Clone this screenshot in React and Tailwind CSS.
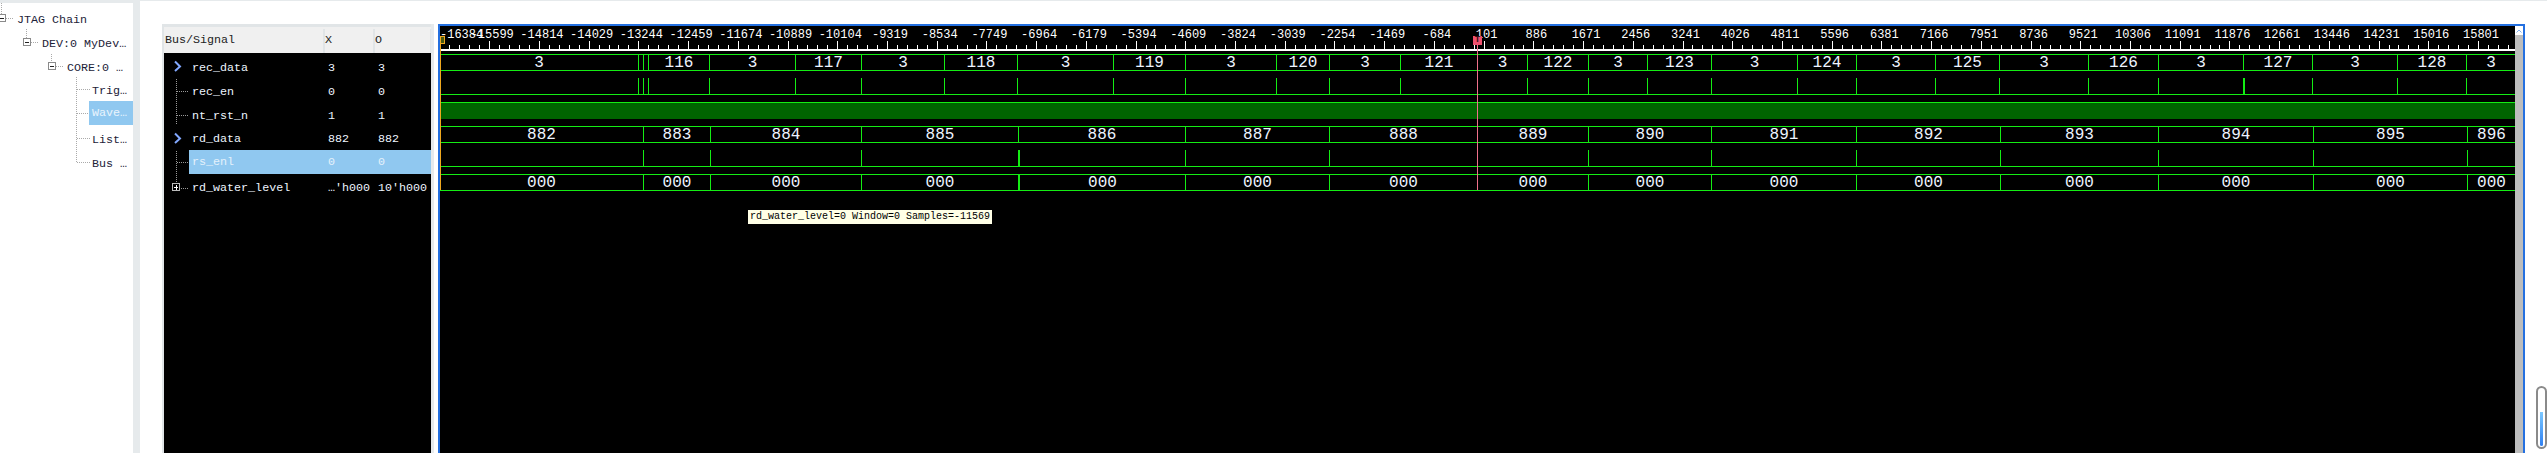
const GREEN = '#14ec14';

// pixel edges of the transitions, measured from the wave panel's left edge (x = 440)
const recEdges = [440, 638, 643, 648, 709, 795, 861, 944, 1017, 1113, 1185, 1276, 1329, 1400, 1477, 1527, 1588, 1647, 1711, 1797, 1856, 1935, 1999, 2088, 2158, 2243, 2312, 2397, 2466, 2515];
const recValues = ['3', '', '', '116', '3', '117', '3', '118', '3', '119', '3', '120', '3', '121', '3', '122', '3', '123', '3', '124', '3', '125', '3', '126', '3', '127', '3', '128', '3'];
const rdEdges = [440, 643, 710, 861, 1018, 1185, 1329, 1477, 1588, 1711, 1856, 2000, 2158, 2313, 2467, 2515];
const rdValues = ['882', '883', '884', '885', '886', '887', '888', '889', '890', '891', '892', '893', '894', '895', '896'];
const levelValues = rdValues.map(() => '000');

const signals = [
    { name: 'rec_data', x: '3', o: '3', h: 'h-6' },
    { name: 'rec_en', x: '0', o: '0', h: 'h-6' },
    { name: 'nt_rst_n', x: '1', o: '1', h: 'h-6' },
    { name: 'rd_data', x: '882', o: '882', h: 'h-[22px]' },
    { name: 'rs_enl', x: '0', o: '0', h: 'h-6', selected: true },
    { name: 'rd_water_level', x: "…'h000", o: "10'h000", h: 'h-6 mt-[2px]' },
];

const treeRows = [
    { label: 'JTAG Chain', pad: 'pl-[17px]', h: 'h-6' },
    { label: 'DEV:0 MyDev…', pad: 'pl-[42px]', h: 'h-6' },
    { label: 'CORE:0 …', pad: 'pl-[67px]', h: 'h-6' },
    { label: 'Trig…', pad: 'pl-[92px]', h: 'h-[22px]' },
    { label: 'Wave…', pad: 'pl-[89px]', h: 'h-6', selected: true },
    { label: 'List…', pad: 'pl-[92px]', h: 'h-6 mt-[2px]' },
    { label: 'Bus …', pad: 'pl-[92px]', h: 'h-6' },
];

const TreeLines = () => (
    <svg className="absolute left-0 top-0" width="133" height="180" shapeRendering="crispEdges">
        <g stroke="#aaa" strokeDasharray="1 1" fill="none">
            <path d="M1.5 0V11M6 15.5H13" />
            <path d="M26.5 26V35M31 39.5H38" />
            <path d="M51.5 51V59M56 63.5H63" />
            <path d="M76.5 74V159.5M77 86.5H90M77 110.5H89M77 135.5H90M77 159.5H90" />
        </g>
        <g stroke="#8a8a8a" fill="#fff">
            <rect x="-2.5" y="11.5" width="8" height="7" />
            <rect x="23.5" y="35.5" width="7" height="7" />
            <rect x="48.5" y="59.5" width="7" height="7" />
        </g>
        <path d="M0 15.5H4M25 39.5H29M50 63.5H54" stroke="#222" />
    </svg>
);

const SignalLines = () => (
    <svg className="absolute left-0 top-0" width="30" height="150" shapeRendering="crispEdges">
        <g stroke="#9a9a9a" strokeDasharray="1 1" fill="none">
            <path d="M12.5 26V72M13 38.5H24M13 62.5H24" />
            <path d="M12.5 98V130M13 109.5H25M17 135.5H24" />
        </g>
        <rect x="8.5" y="130.5" width="7" height="7" stroke="#bbb" fill="#000" />
        <path d="M10 134.5H14M12.5 132V137" stroke="#fff" />
        <g shapeRendering="auto" stroke="#82a8ff" strokeWidth="2" fill="none">
            <path d="M11 8.5L16 13.5L11 18" />
            <path d="M11 80.5L16 85.5L11 90" />
        </g>
    </svg>
);

const Ruler = () => {
    const width = 2075;
    const ticks = [];
    for (let i = 0; i <= 208; i++) {
        const x = Math.round(-0.5 + 9.944 * i);
        if (x >= 0 && x < width) ticks.push({ x, major: i % 5 === 0 });
    }
    const labels = [];
    for (let k = 0; k <= 41; k++) labels.push({ k, text: String(-16384 + 785 * k) });
    return (
        <div className="relative h-6 shrink-0">
            {labels.map(({ k, text }) => (
                <span
                    key={k}
                    className={`absolute top-[3px] text-[12px] leading-[13px] text-white whitespace-nowrap ${k === 0 ? '' : '-translate-x-1/2'}`}
                    style={{ left: k === 0 ? 0 : -0.5 + 49.72 * k + 3 }}
                >
                    {text}
                </span>
            ))}
            <svg className="absolute left-0 top-0" width={width} height="25" shapeRendering="crispEdges">
                {ticks.map(({ x, major }) => (
                    <rect key={x} x={x} y={major ? 15 : 19} width="1" height={major ? 8 : 4} fill="#fff" />
                ))}
                <rect x="0" y="23" width={width} height="2" fill="#fff" />
            </svg>
        </div>
    );
};

const BusRow = ({ edges, values, thick = [] }) => (
    <div className="flex h-[17px] border-y border-[#14ec14]">
        {values.map((value, i) => (
            <div
                key={i}
                className="flex items-center justify-center text-[16px] leading-none text-[#eef4ff] overflow-hidden"
                style={{
                    width: edges[i + 1] - edges[i],
                    borderLeft: i === 0 ? 'none' : `${thick.includes(edges[i]) ? 2 : 1}px solid ${GREEN}`,
                }}
            >
                {value}
            </div>
        ))}
    </div>
);

const BitRow = ({ edges, thick = [] }) => (
    <div className="flex h-[17px] border-b border-[#14ec14]">
        {edges.slice(0, -1).map((edge, i) => (
            <div
                key={edge}
                style={{
                    width: edges[i + 1] - edge,
                    borderLeft: i === 0 ? 'none' : `${thick.includes(edge) ? 2 : 1}px solid ${GREEN}`,
                }}
            />
        ))}
    </div>
);

export default function App() {
    return (
        <div className="flex h-[453px] w-[2547px] overflow-hidden bg-white font-['Liberation_Mono',monospace] text-[11.7px]">
            {/* Project tree */}
            <aside className="relative w-[140px] shrink-0 border-r-[7px] border-t-[3px] border-[#e6eaec] pt-1 text-[#1c2238]">
                <TreeLines />
                {treeRows.map((row) => (
                    <div key={row.label} className={`flex items-center ${row.h}`}>
                        {row.selected ? (
                            <div className="ml-[89px] flex h-full flex-1 items-center bg-[#90c8f0] pl-[3px] pt-[2px] text-[#e9f4fd]">{row.label}</div>
                        ) : (
                            <div className={`relative pt-[3px] ${row.pad}`}>{row.label}</div>
                        )}
                    </div>
                ))}
            </aside>

            <main className="flex flex-1 border-t border-[#e6eaec] pl-[22px] pt-[23px]">
                {/* Signal table */}
                <section className="flex w-[269px] shrink-0 flex-col border-l-2 border-t-[3px] border-[#e1e5e7]">
                    <div className="flex h-[26px] shrink-0 items-center bg-[#f0f0f0] pt-[2px] text-[#222]">
                        <div className="flex h-full w-[161px] items-center border-r-2 border-[#e1e5e7] pl-px">Bus/Signal</div>
                        <div className="flex h-full w-[50px] items-center border-r-2 border-[#e1e5e7]">X</div>
                        <div className="flex h-full flex-1 items-center border-r border-[#e1e5e7]">O</div>
                    </div>
                    <div className="relative flex-1 bg-black pt-[3px] text-[#eef6ff]">
                        {signals.map((s) => (
                            <div key={s.name} className={`flex pl-[25px] ${s.h}`}>
                                <div className={`flex flex-1 items-center pt-[2px] ${s.selected ? 'bg-[#90c8f0] text-[#e4f1fb]' : ''}`}>
                                    <span className="w-[139px] pl-[3px]">{s.name}</span>
                                    <span className="w-[50px]">{s.x}</span>
                                    <span>{s.o}</span>
                                </div>
                            </div>
                        ))}
                        <SignalLines />
                    </div>
                </section>

                <div className="w-[7px] shrink-0 border-l-[3px] border-[#e6eaec]" />

                {/* Wave window */}
                <section className="relative flex w-[2087px] shrink-0 border-x-2 border-t-2 border-[#2470e0] bg-black">
                    <div className="flex w-[2075px] shrink-0 flex-col">
                        <Ruler />
                        <div className="mt-1 flex flex-col gap-[7px]">
                            <BusRow edges={recEdges} values={recValues} />
                            <BitRow edges={recEdges} thick={[2243]} />
                            <div className="h-[17px] border-t border-[#14ec14] bg-[#006400]" />
                            <BusRow edges={rdEdges} values={rdValues} />
                            <BitRow edges={rdEdges} thick={[1018]} />
                            <BusRow edges={rdEdges} values={levelValues} thick={[1018]} />
                        </div>
                    </div>

                    {/* vertical scrollbar */}
                    <div className="w-2 shrink-0 bg-[#bdbdbd]">
                        <div className="flex h-[9px] items-center justify-center bg-white">
                            <svg width="6" height="4" viewBox="0 0 6 4" fill="none" stroke="#7fb0ee" strokeWidth="1">
                                <path d="M0.5 3.5L3 1L5.5 3.5" />
                            </svg>
                        </div>
                    </div>

                    {/* X marker and cursor */}
                    <div className="absolute left-0 top-[10px] h-[154px] w-px bg-[#f0a81e]" />
                    <div className="absolute left-0 top-[10px] h-[8px] w-[5px] border border-[#f0a81e] bg-[#4a5a10]" />
                    <div className="absolute left-[1037px] top-[10px] h-[154px] w-px bg-[#f0708a]" />
                    <div className="absolute left-[1033px] top-[10px] flex h-[9px] w-[9px] items-center justify-center bg-[#f0506e] text-[9px] font-bold leading-none text-[#301018]">T</div>

                    {/* hover tooltip */}
                    <div className="absolute left-[308px] top-[184px] flex h-[14px] w-[244px] items-center bg-[#ffffe6] pl-[2px] text-[10px] leading-none whitespace-nowrap text-black">
                        rd_water_level=0 Window=0 Samples=-11569
                    </div>
                </section>
            </main>

            {/* progress pill at the window edge */}
            <div className="absolute left-[2536px] top-[386px] flex h-[63px] w-[11px] flex-col justify-end rounded-full border-2 border-[#8a8a8a] bg-white px-[2px] pb-[1px]">
                <div className="h-[34px] rounded-b-sm bg-gradient-to-b from-[#7cc8ff] to-[#2f7ff0]" />
            </div>
        </div>
    );
}
